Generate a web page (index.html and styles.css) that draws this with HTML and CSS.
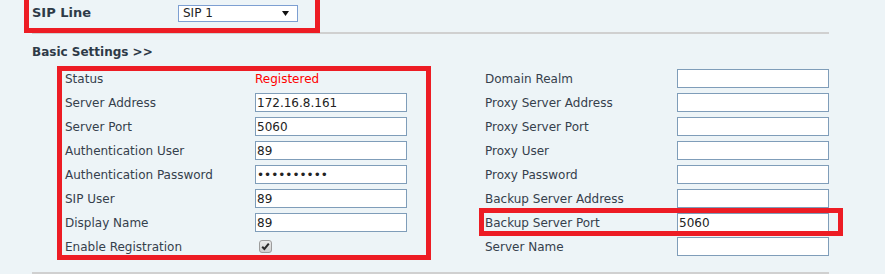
FILE: index.html
```html
<!DOCTYPE html>
<html>
<head>
<meta charset="utf-8">
<link rel="stylesheet" href="styles.css">
</head>
<body>
<div class="page">
  <div class="sipline">
    <span class="sip-label">SIP Line</span>
    <div class="select">
      <span>SIP 1</span>
      <svg class="caret" width="7" height="5" viewBox="0 0 7 5"><path d="M0 0H7L3.5 5Z" fill="#111"/></svg>
    </div>
    <div class="mark mark-top"></div>
  </div>
  <div class="heading">Basic Settings &gt;&gt;</div>
  <div class="form">
    <div class="col col-left">
      <div class="row"><span class="label">Status</span><span class="status">Registered</span></div>
      <div class="row"><span class="label">Server Address</span><input class="input" type="text" value="172.16.8.161"></div>
      <div class="row"><span class="label">Server Port</span><input class="input" type="text" value="5060"></div>
      <div class="row"><span class="label">Authentication User</span><input class="input" type="text" value="89"></div>
      <div class="row"><span class="label">Authentication Password</span><input class="input" type="password" value="abcdefghij"></div>
      <div class="row"><span class="label">SIP User</span><input class="input" type="text" value="89"></div>
      <div class="row"><span class="label">Display Name</span><input class="input" type="text" value="89"></div>
      <div class="row"><span class="label">Enable Registration</span>
        <svg class="check" width="13" height="13" viewBox="0 0 13 13">
          <defs><linearGradient id="cg" x1="0" y1="0" x2="0" y2="1"><stop offset="0" stop-color="#ececec"/><stop offset="1" stop-color="#cdcdcd"/></linearGradient></defs>
          <rect x="0.5" y="0.5" width="12" height="12" rx="2.5" fill="url(#cg)" stroke="#9c9c9c"/>
          <path d="M3.2 6.8L5.4 9L9.8 3.6" fill="none" stroke="#2a2a2a" stroke-width="2"/>
        </svg>
      </div>
      <div class="mark mark-left"></div>
    </div>
    <div class="col col-right">
      <div class="row"><span class="label">Domain Realm</span><input class="input" type="text" value=""></div>
      <div class="row"><span class="label">Proxy Server Address</span><input class="input" type="text" value=""></div>
      <div class="row"><span class="label">Proxy Server Port</span><input class="input" type="text" value=""></div>
      <div class="row"><span class="label">Proxy User</span><input class="input" type="text" value=""></div>
      <div class="row"><span class="label">Proxy Password</span><input class="input" type="text" value=""></div>
      <div class="row"><span class="label">Backup Server Address</span><input class="input" type="text" value=""></div>
      <div class="row"><span class="label">Backup Server Port</span><input class="input" type="text" value="5060"><div class="mark mark-right"></div></div>
      <div class="row"><span class="label">Server Name</span><input class="input" type="text" value=""></div>
    </div>
  </div>
  <div class="rule"></div>
</div>
</body>
</html>
```
FILE: styles.css
```css
html, body {
  margin: 0;
  padding: 0;
  background: #edf4f7;
  font-family: "DejaVu Sans", "Verdana", sans-serif;
  font-size: 12px;
  color: #35404c;
  overflow: hidden;
}

.page {
  margin-left: 32px;
  width: 797px;
}

.sipline {
  position: relative;
  height: 32px;
  box-sizing: content-box;
  border-bottom: 2px solid #d0d0d0;
  display: flex;
  align-items: flex-start;
}

.sip-label {
  font-weight: bold;
  font-size: 13px;
  line-height: 15px;
  margin-top: 5px;
  width: 146px;
  color: #2e3a47;
}

.select {
  margin-top: 5px;
  width: 120px;
  height: 17px;
  box-sizing: border-box;
  border: 1px solid #7d9fd2;
  background: #fff;
  display: flex;
  align-items: center;
  justify-content: space-between;
  padding: 0 8px 0 4px;
  color: #222;
  line-height: 15px;
}

.caret {
  display: block;
}

.mark {
  position: absolute;
  box-sizing: border-box;
  border: 5px solid #ed1c24;
  pointer-events: none;
}

.mark-top {
  left: -8px;
  width: 296px;
  top: -6px;
  bottom: -1px;
}

.heading {
  font-weight: bold;
  height: 31px;
  padding-top: 2px;
  line-height: 33px;
  color: #2e3a47;
}

.form {
  display: flex;
  margin-left: 33px;
}

.col {
  position: relative;
  display: flex;
  flex-direction: column;
}

.col-left {
  width: 342px;
}

.col-right {
  width: 344px;
  margin-left: 78px;
}

.row {
  position: relative;
  display: flex;
  align-items: flex-start;
  height: 24px;
}

.label {
  line-height: 24px;
  white-space: nowrap;
}

.col-left .label {
  width: 190px;
}

.col-right .label {
  width: 192px;
}

.status {
  line-height: 24px;
  color: #ff0000;
}

.input {
  margin: 2px 0 0 0;
  width: 152px;
  height: 19px;
  box-sizing: border-box;
  border: 1px solid #7f9db9;
  border-radius: 0;
  background: #fff;
  padding: 0 1px;
  font-family: "DejaVu Sans", sans-serif;
  font-size: 12px;
  color: #222;
  outline: none;
}

.check {
  display: block;
  margin: 5px 0 0 4px;
}

.mark-left {
  left: -8px;
  right: -24px;
  top: -1px;
  bottom: -1px;
}

.mark-right {
  left: -6px;
  right: -14px;
  top: -3px;
  bottom: -1px;
}

.rule {
  margin-top: 13px;
  height: 2px;
  background: #d0d0d0;
}
```
